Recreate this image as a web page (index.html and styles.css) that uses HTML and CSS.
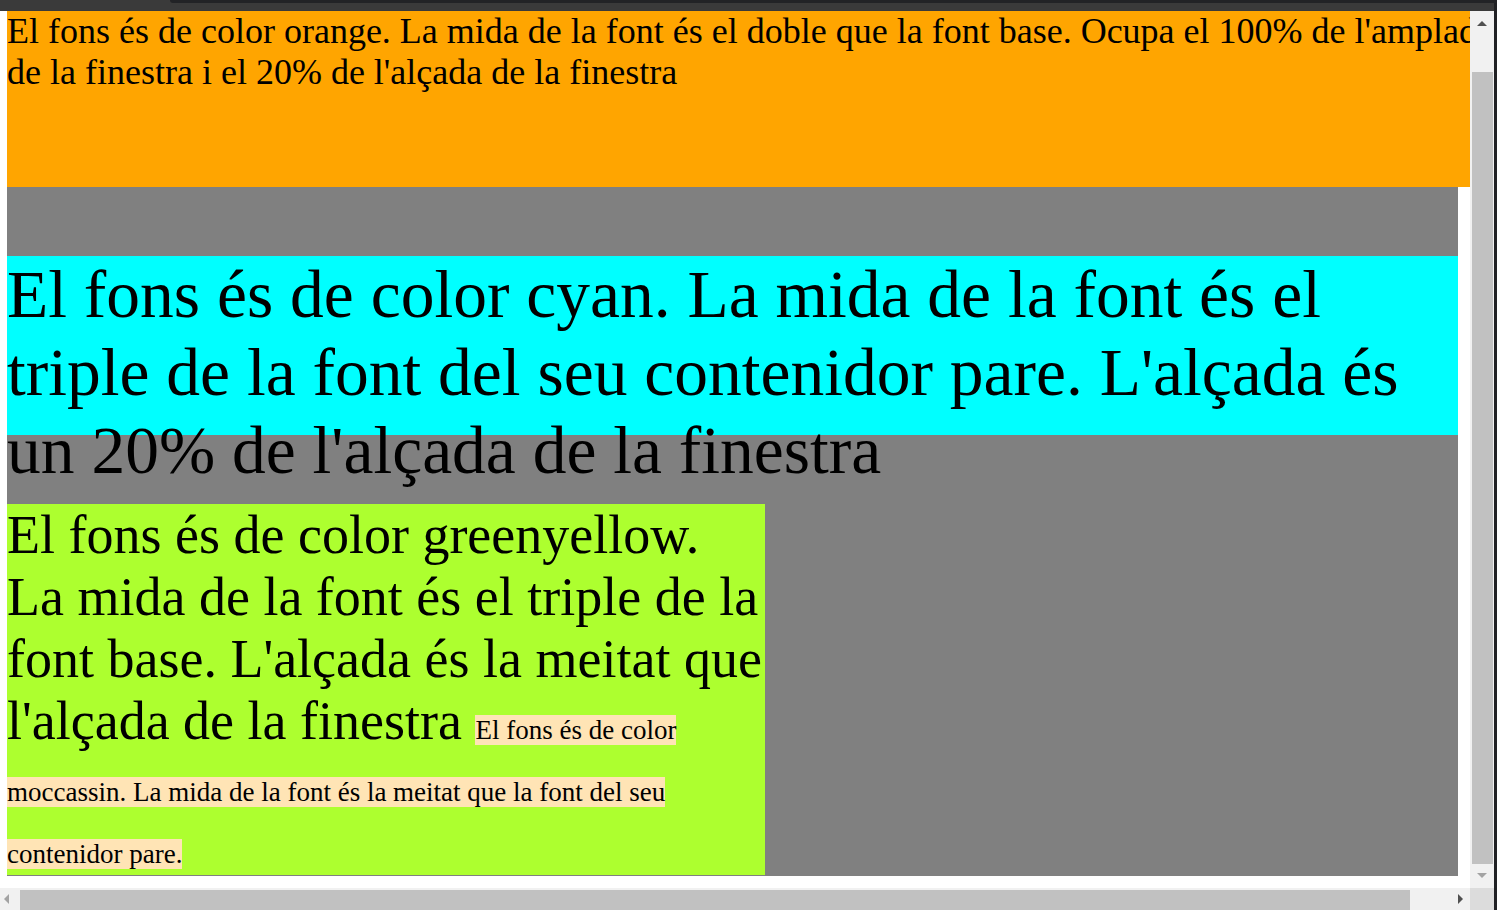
FILE: index.html
```html
<!DOCTYPE html>
<html lang="ca">
<head>
<meta charset="utf-8">
<title>Mides</title>
<link rel="stylesheet" href="styles.css">
</head>
<body>
<div class="main">
  <div class="chrome"><div class="tab"></div></div>
  <div class="row">
    <div class="viewport">
      <div class="orange">El fons és de color orange. La mida de la font és el doble que la font base. Ocupa el 100% de l'amplada de la finestra i el 20% de l'alçada de la finestra</div>
      <div class="gray">
        <div class="cyan">El fons és de color cyan. La mida de la font és el triple de la font del seu contenidor pare. L'alçada és un 20% de l'alçada de la finestra</div>
        <div class="green">El fons és de color greenyellow. La mida de la font és el triple de la font base. L'alçada és la meitat que l'alçada de la finestra <span class="moc">El fons és de color moccassin. La mida de la font és la meitat que la font del seu contenidor pare.</span></div>
      </div>
    </div>
    <div class="vscroll">
      <div class="arrow up"></div>
      <div class="vtrack"><div class="vthumb"></div></div>
      <div class="arrow down"></div>
    </div>
  </div>
  <div class="hrow">
    <div class="hscroll">
      <div class="arrow left"></div>
      <div class="htrack"><div class="hthumb"></div></div>
      <div class="arrow right"></div>
    </div>
    <div class="corner"></div>
  </div>
</div>
<div class="edge"></div>
</body>
</html>
```
FILE: styles.css
```css
html, body {
  margin: 0;
  padding: 0;
  width: 1497px;
  height: 910px;
  overflow: hidden;
  background: #202124;
}
body {
  display: flex;
}
.main {
  width: 1494px;
  height: 910px;
  display: flex;
  flex-direction: column;
}
.edge {
  width: 3px;
  height: 910px;
  background: #202124;
}
.chrome {
  height: 11px;
  background: #3a3a3a;
  position: relative;
}
.tab {
  position: absolute;
  left: 170px;
  right: -3px;
  top: 0;
  height: 3px;
  background: #222326;
  border-radius: 0 0 0 6px;
}
.row {
  display: flex;
  height: 877px;
}
.viewport {
  width: 1463px;
  height: 877px;
  padding-left: 7px;
  background: #ffffff;
  overflow: hidden;
  font-family: "Liberation Serif", "Times New Roman", serif;
  color: #000;
}
.orange {
  width: 1494px;
  height: 176px;
  background: orange;
  font-size: 36px;
  line-height: 41.4px;
}
.gray {
  width: 1451px;
  height: 689px;
  background: gray;
  padding-top: 69px;
  box-sizing: border-box;
  display: flex;
  flex-direction: column;
  gap: 69px;
}
.cyan {
  height: 179px;
  flex: none;
  background: cyan;
  font-size: 67.5px;
}
.green {
  width: 758px;
  height: 371px;
  flex: none;
  background: greenyellow;
  font-size: 54px;
}
.moc {
  font-size: 27px;
  background: moccasin;
}
.vscroll {
  width: 24px;
  height: 877px;
  background: #f1f1f1;
  display: flex;
  flex-direction: column;
  align-items: center;
}
.vtrack {
  flex: 1;
  width: 100%;
  padding: 0 1px 0 2px;
  box-sizing: border-box;
  display: flex;
  flex-direction: column;
}
.vthumb {
  margin-top: 38px;
  height: 792px;
  background: #c1c1c1;
}
.arrow {
  width: 0;
  height: 0;
  flex: none;
}
.up {
  margin-top: 10px;
  margin-bottom: 8px;
  border-left: 5px solid transparent;
  border-right: 5px solid transparent;
  border-bottom: 5px solid #505050;
}
.down {
  margin-top: 9px;
  margin-bottom: 10px;
  border-left: 5px solid transparent;
  border-right: 5px solid transparent;
  border-top: 5px solid #a3a3a3;
}
.hrow {
  display: flex;
  height: 22px;
}
.hscroll {
  width: 1470px;
  height: 22px;
  background: #f1f1f1;
  display: flex;
  align-items: center;
}
.htrack {
  flex: 1;
  height: 100%;
  display: flex;
  padding-top: 2px;
  box-sizing: border-box;
}
.hthumb {
  margin-left: 7px;
  width: 1390px;
  background: #c1c1c1;
}
.left {
  margin-left: 4px;
  margin-right: 4px;
  border-top: 5px solid transparent;
  border-bottom: 5px solid transparent;
  border-right: 5px solid #a3a3a3;
}
.right {
  margin-left: 4px;
  margin-right: 7px;
  border-top: 5px solid transparent;
  border-bottom: 5px solid transparent;
  border-left: 5px solid #505050;
}
.corner {
  width: 24px;
  height: 22px;
  background: #dcdcdc;
}
```
